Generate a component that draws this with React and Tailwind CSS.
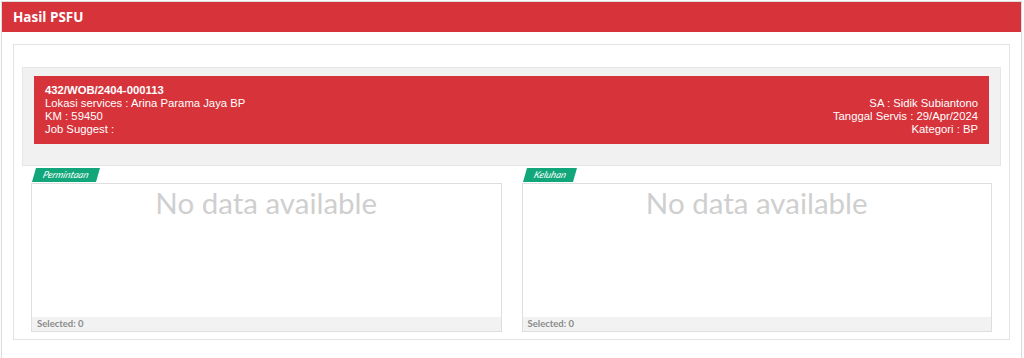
import React from 'react';

const RED = 'bg-[#d7333a]';

// Liste de sélection vide avec étiquette verte
const ListBox = ({ label }) => (
  <div className="flex-1 flex flex-col">
    <div className="h-[15px] flex items-start">
      <div className="ml-[3px] -skew-x-[16deg] bg-[#12a77b] h-[14px] px-[9px] flex items-center">
        <span className="text-white text-[9.5px] italic leading-none font-['Lato',sans-serif]">{label}</span>
      </div>
    </div>
    <div className="h-[149px] border border-[#dedede] bg-white flex flex-col">
      <div className="flex-1 pt-[3px] text-center text-[29.5px] leading-[32px] text-[#cfcfcf] font-['Lato',sans-serif]">
        No data available
      </div>
      <div className="h-[14px] bg-[#f2f2f2] pl-[5px] flex items-center text-[9.5px] font-bold text-[#8a8a8a] font-['Lato',sans-serif]">
        Selected: 0
      </div>
    </div>
  </div>
);

const App = () => {
  return (
    <div className="min-h-screen bg-[#fcfcfc] pt-px pl-px pr-[2px]">
      <div className="border border-[#dcdcdc] bg-white min-h-[360px]">
        {/* En-tête */}
        <div className={`${RED} h-[30px] px-[11px] flex items-center text-white font-bold text-[13.5px] font-['Open_Sans',sans-serif]`}>
          Hasil PSFU
        </div>
        {/* Corps */}
        <div className="px-[11px] pt-[12px]">
          <div className="border border-[#e3e3e3] px-[8px] pt-[22px] pb-[7px]">
            {/* Bloc d'information */}
            <div className="bg-[#f1f1f1] border border-[#e6e6e6] pt-[8px] px-[11px] pb-[21px]">
              <div className={`${RED} px-[11px] py-[8px] flex justify-between items-end text-white text-[11.3px] leading-[13px] font-['Liberation_Sans',Arial,sans-serif]`}>
                <div>
                  <div className="font-bold">432/WOB/2404-000113</div>
                  <div>Lokasi services : Arina Parama Jaya BP</div>
                  <div>KM : 59450</div>
                  <div>Job Suggest :</div>
                </div>
                <div className="text-right">
                  <div>SA : Sidik Subiantono</div>
                  <div>Tanggal Servis : 29/Apr/2024</div>
                  <div>Kategori : BP</div>
                </div>
              </div>
            </div>
            {/* Listes */}
            <div className="mt-[2px] px-[9px] flex gap-[20px]">
              <ListBox label="Permintaan" />
              <ListBox label="Keluhan" />
            </div>
          </div>
        </div>
      </div>
    </div>
  );
};

export default App;
